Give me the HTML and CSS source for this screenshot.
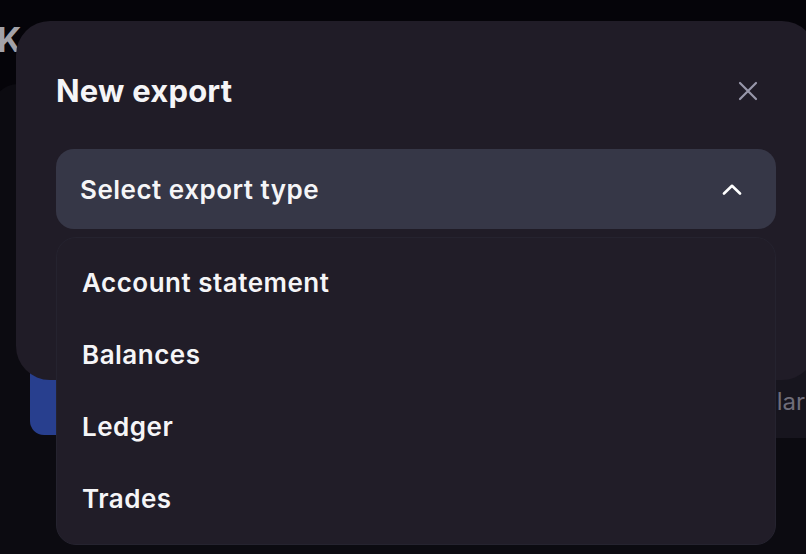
FILE: index.html
```html
<!DOCTYPE html>
<html lang="en">
<head>
<meta charset="utf-8">
<title>New export</title>
<link rel="stylesheet" href="styles.css">
</head>
<body>
<div class="page">
  <header class="page-head">
    <h1 class="page-title">Konto</h1>
  </header>
  <section class="panel">
    <div class="asset-row">
      <div class="asset-action"></div>
      <div class="asset-info"><span class="asset-name">US Dollar</span></div>
    </div>
  </section>
</div>

<div class="modal" role="dialog" aria-labelledby="modal-title">
  <div class="modal-head">
    <h2 class="modal-title" id="modal-title">New export</h2>
    <button class="close-btn" aria-label="Close">
      <svg width="20" height="20" viewBox="0 0 20 20" fill="none" stroke="currentColor" stroke-width="2.2" stroke-linecap="round">
        <path d="M2 2 L18 18 M18 2 L2 18"/>
      </svg>
    </button>
  </div>
  <div class="select">
    <button class="select-trigger">
      <span>Select export type</span>
      <svg class="chev" width="20" height="11" viewBox="0 0 20 11" fill="none" stroke="currentColor" stroke-width="2.6" stroke-linecap="round" stroke-linejoin="round">
        <path d="M2 9.5 L10 1.8 L18 9.5"/>
      </svg>
    </button>
    <ul class="select-menu">
      <li class="select-option">Account statement</li>
      <li class="select-option">Balances</li>
      <li class="select-option">Ledger</li>
      <li class="select-option">Trades</li>
    </ul>
  </div>
</div>
</body>
</html>
```

FILE: styles.css
```css
html, body {
  margin: 0;
  padding: 0;
  width: 806px;
  height: 554px;
  overflow: hidden;
  background: #050409;
  font-family: Inter, "Noto Sans", "Liberation Sans", sans-serif;
}

.page {
  width: 840px;
  height: 554px;
  display: flex;
  flex-direction: column;
}

.page-head {
  height: 84px;
  padding-top: 20px;
  box-sizing: border-box;
}

.page-title {
  margin: 0 0 0 -3px;
  font-size: 34px;
  line-height: 40px;
  font-weight: 700;
  color: #a3a2a8;
}

.panel {
  flex: 1;
  margin-left: -8px;
  background: #0c0b11;
  border-top-left-radius: 26px;
  padding: 271px 0 0 38px;
}

.asset-row {
  display: flex;
  height: 83px;
}

.asset-action {
  width: 80px;
  height: 80px;
  background: #283f8e;
  border-radius: 14px;
}

.asset-info {
  flex: 1;
  background: #17151e;
  display: flex;
  justify-content: flex-end;
  align-items: flex-end;
  padding: 0 35px 22px 0;
}

.asset-name {
  font-size: 24px;
  line-height: 28px;
  color: #6f6d7a;
}

.modal {
  position: absolute;
  left: 16px;
  top: 21px;
  width: 800px;
  height: 359px;
  box-sizing: border-box;
  padding: 50px 40px 40px;
  background: #201c27;
  border-radius: 34px;
}

.modal-head {
  display: flex;
  align-items: center;
  justify-content: space-between;
}

.modal-title {
  margin: 0;
  font-size: 31px;
  line-height: 36px;
  font-weight: 700;
  color: #f5f5f7;
  letter-spacing: 0.2px;
}

.close-btn {
  width: 40px;
  height: 40px;
  margin-right: 8px;
  padding: 0;
  border: 0;
  background: transparent;
  color: #9897aa;
  display: flex;
  align-items: center;
  justify-content: center;
}

.select {
  position: relative;
  margin-top: 38px;
}

.select-trigger {
  width: 100%;
  height: 80px;
  box-sizing: border-box;
  padding: 0 34px 0 24px;
  border: 0;
  border-radius: 18px;
  background: #363747;
  color: #f5f5f7;
  display: flex;
  align-items: center;
  justify-content: space-between;
  font-family: inherit;
  font-size: 26px;
  font-weight: 600;
  letter-spacing: 0.5px;
  text-align: left;
}

.chev {
  color: #ffffff;
}

.select-menu {
  position: absolute;
  left: 0;
  right: 0;
  top: calc(100% + 8px);
  margin: 0;
  padding: 8px 0 12px;
  list-style: none;
  background: #211d28;
  border: 1px solid #25232f;
  border-radius: 20px;
  box-sizing: border-box;
  height: 308px;
}

.select-option {
  height: 72px;
  display: flex;
  align-items: center;
  padding-left: 25px;
  font-size: 26px;
  font-weight: 600;
  letter-spacing: 0.5px;
  color: #f5f5f7;
}
```
